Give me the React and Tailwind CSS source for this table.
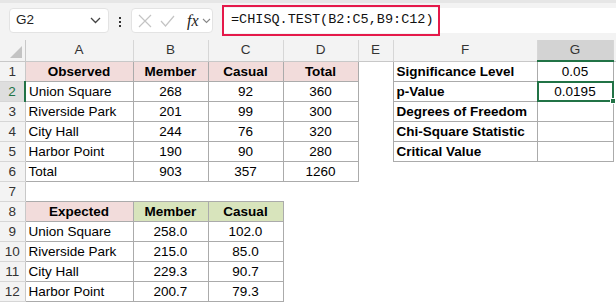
const cols = [
  { key: 'A', w: 108 },
  { key: 'B', w: 75 },
  { key: 'C', w: 75 },
  { key: 'D', w: 75 },
  { key: 'E', w: 35 },
  { key: 'F', w: 144 },
  { key: 'G', w: 76 },
];

const PINK = 'bg-[#f2dcdb]';
const GREEN = 'bg-[#d8e4bc]';

// each row: array of cells for A..G; a cell is null (empty, no border) or {t, b, c, bg, box}
const rows = [
  [
    { t: 'Observed', b: 1, c: 1, bg: PINK, box: 1 },
    { t: 'Member', b: 1, c: 1, bg: PINK, box: 1 },
    { t: 'Casual', b: 1, c: 1, bg: PINK, box: 1 },
    { t: 'Total', b: 1, c: 1, bg: PINK, box: 1 },
    null,
    { t: 'Significance Level', b: 1, box: 1 },
    { t: '0.05', c: 1, box: 1 },
  ],
  [
    { t: 'Union Square', box: 1 },
    { t: '268', c: 1, box: 1 },
    { t: '92', c: 1, box: 1 },
    { t: '360', c: 1, box: 1 },
    null,
    { t: 'p-Value', b: 1, box: 1 },
    { t: '0.0195', c: 1, box: 1, sel: 1 },
  ],
  [
    { t: 'Riverside Park', box: 1 },
    { t: '201', c: 1, box: 1 },
    { t: '99', c: 1, box: 1 },
    { t: '300', c: 1, box: 1 },
    null,
    { t: 'Degrees of Freedom', b: 1, box: 1 },
    { t: '', box: 1 },
  ],
  [
    { t: 'City Hall', box: 1 },
    { t: '244', c: 1, box: 1 },
    { t: '76', c: 1, box: 1 },
    { t: '320', c: 1, box: 1 },
    null,
    { t: 'Chi-Square Statistic', b: 1, box: 1 },
    { t: '', box: 1 },
  ],
  [
    { t: 'Harbor Point', box: 1 },
    { t: '190', c: 1, box: 1 },
    { t: '90', c: 1, box: 1 },
    { t: '280', c: 1, box: 1 },
    null,
    { t: 'Critical Value', b: 1, box: 1 },
    { t: '', box: 1 },
  ],
  [
    { t: 'Total', box: 1 },
    { t: '903', c: 1, box: 1 },
    { t: '357', c: 1, box: 1 },
    { t: '1260', c: 1, box: 1 },
    null,
    null,
    null,
  ],
  [null, null, null, null, null, null, null],
  [
    { t: 'Expected', b: 1, c: 1, bg: PINK, box: 1 },
    { t: 'Member', b: 1, c: 1, bg: GREEN, box: 1 },
    { t: 'Casual', b: 1, c: 1, bg: GREEN, box: 1 },
    null,
    null,
    null,
    null,
  ],
  [
    { t: 'Union Square', box: 1 },
    { t: '258.0', c: 1, box: 1 },
    { t: '102.0', c: 1, box: 1 },
    null,
    null,
    null,
    null,
  ],
  [
    { t: 'Riverside Park', box: 1 },
    { t: '215.0', c: 1, box: 1 },
    { t: '85.0', c: 1, box: 1 },
    null,
    null,
    null,
    null,
  ],
  [
    { t: 'City Hall', box: 1 },
    { t: '229.3', c: 1, box: 1 },
    { t: '90.7', c: 1, box: 1 },
    null,
    null,
    null,
    null,
  ],
  [
    { t: 'Harbor Point', box: 1 },
    { t: '200.7', c: 1, box: 1 },
    { t: '79.3', c: 1, box: 1 },
    null,
    null,
    null,
    null,
  ],
];

function Toolbar() {
  return (
    <div className="flex h-[40px] items-start border-t-[3px] border-[#e6e6e6] bg-[#f3f3f3]">
      <div className="ml-[9px] mt-[5px] flex h-[25px] w-[100px] items-center justify-between rounded-[4px] border border-[#e3e3e3] bg-white pl-[6px] pr-[7px] text-[13.5px] text-[#222]">
        <span>G2</span>
        <svg width="11" height="7" viewBox="0 0 11 7" fill="none" stroke="#444" strokeWidth="1.3">
          <path d="M1 1l4.5 4.5L10 1" />
        </svg>
      </div>
      <div className="mt-[14px] flex w-[22px] flex-col items-center gap-[2px]">
        <span className="h-[2px] w-[2px] bg-[#333]" />
        <span className="h-[2px] w-[2px] bg-[#333]" />
        <span className="h-[2px] w-[2px] bg-[#333]" />
      </div>
      <div className="mt-[5px] flex h-[25px] w-[82px] items-center rounded-[4px] border border-[#e3e3e3] bg-white pl-[6px]">
        <svg width="14" height="14" viewBox="0 0 14 14" stroke="#c4c4c4" strokeWidth="1.2" fill="none">
          <path d="M1 1l12 12M13 1L1 13" />
        </svg>
        <svg className="ml-[8px]" width="15" height="12" viewBox="0 0 15 12" stroke="#c4c4c4" strokeWidth="1.2" fill="none">
          <path d="M1 6l4.5 5L14 1" />
        </svg>
        <span className="ml-[12px] text-[16px] italic leading-none text-[#222]" style={{ fontFamily: '"Liberation Serif", serif' }}>
          fx
        </span>
        <svg className="ml-[3px]" width="9" height="6" viewBox="0 0 9 6" fill="none" stroke="#888" strokeWidth="1.1">
          <path d="M1 1l3.5 3.5L8 1" />
        </svg>
      </div>
      <div className="relative ml-[9px] mt-[5px] flex h-[25px] flex-1 items-center bg-white pl-[9px]">
        <span className="text-[13.5px] text-[#111]" style={{ fontFamily: '"Liberation Mono", monospace' }}>
          =CHISQ.TEST(B2:C5,B9:C12)
        </span>
        <div className="absolute left-0 top-[-3px] h-[31px] w-[218px] border-2 border-[#e5194a]" />
      </div>
    </div>
  );
}

function Cell({ cell }) {
  if (!cell) return <td className="h-[20px] p-0" />;
  return (
    <td
      className={`relative h-[20px] overflow-visible whitespace-nowrap p-0 px-[3px] leading-[19px] ${
        cell.box ? 'border border-[#ababab]' : ''
      } ${cell.bg || ''} ${cell.b ? 'font-bold' : ''} ${cell.c ? 'text-center' : 'text-left'}`}
    >
      {cell.t}
      {cell.sel ? (
        <div className="absolute -inset-[1px] border-2 border-[#217346]">
          <div className="absolute -bottom-[4px] -right-[4px] h-[6px] w-[6px] border border-white bg-[#217346]" />
        </div>
      ) : null}
    </td>
  );
}

export default function App() {
  return (
    <div className="h-[302px] w-[616px] overflow-hidden bg-white text-[13.5px] text-black" style={{ fontFamily: '"Liberation Sans", Arial, sans-serif' }}>
      <Toolbar />
      <table className="table-fixed border-collapse">
        <colgroup>
          <col style={{ width: 25 }} />
          {cols.map((c) => (
            <col key={c.key} style={{ width: c.w }} />
          ))}
          <col style={{ width: 3 }} />
        </colgroup>
        <thead>
          <tr className="h-[20px] bg-[#f3f3f3] text-[13.5px] font-normal text-[#333]">
            <th className="relative h-[20px] border-b border-r border-[#c8c8c8] p-0">
              <svg className="absolute bottom-[3px] right-[3px]" width="12" height="12" viewBox="0 0 12 12">
                <path d="M12 0v12H0z" fill="#c3c3c3" />
              </svg>
            </th>
            {cols.map((c) => (
              <th
                key={c.key}
                className={`h-[20px] border-r border-[#d6d6d6] p-0 font-normal ${
                  c.key === 'G' ? 'border-b-2 border-b-[#217346] bg-[#d3d3d3]' : 'border-b border-b-[#c8c8c8]'
                }`}
              >
                {c.key}
              </th>
            ))}
            <th className="border-b border-[#c8c8c8] p-0" />
          </tr>
        </thead>
        <tbody>
          {rows.map((r, i) => (
            <tr key={i} className="h-[20px]">
              <td
                className={`h-[20px] border-b p-0 text-center leading-[19px] ${
                  i === 1
                    ? 'border-r-2 border-b-[#d6d6d6] border-r-[#217346] bg-[#dedede] text-[#217346]'
                    : 'border-r border-b-[#d6d6d6] border-r-[#c8c8c8] bg-[#f3f3f3] text-[#333]'
                }`}
              >
                {i + 1}
              </td>
              {r.map((cell, j) => (
                <Cell key={j} cell={cell} />
              ))}
              <td className="p-0" />
            </tr>
          ))}
        </tbody>
      </table>
    </div>
  );
}
